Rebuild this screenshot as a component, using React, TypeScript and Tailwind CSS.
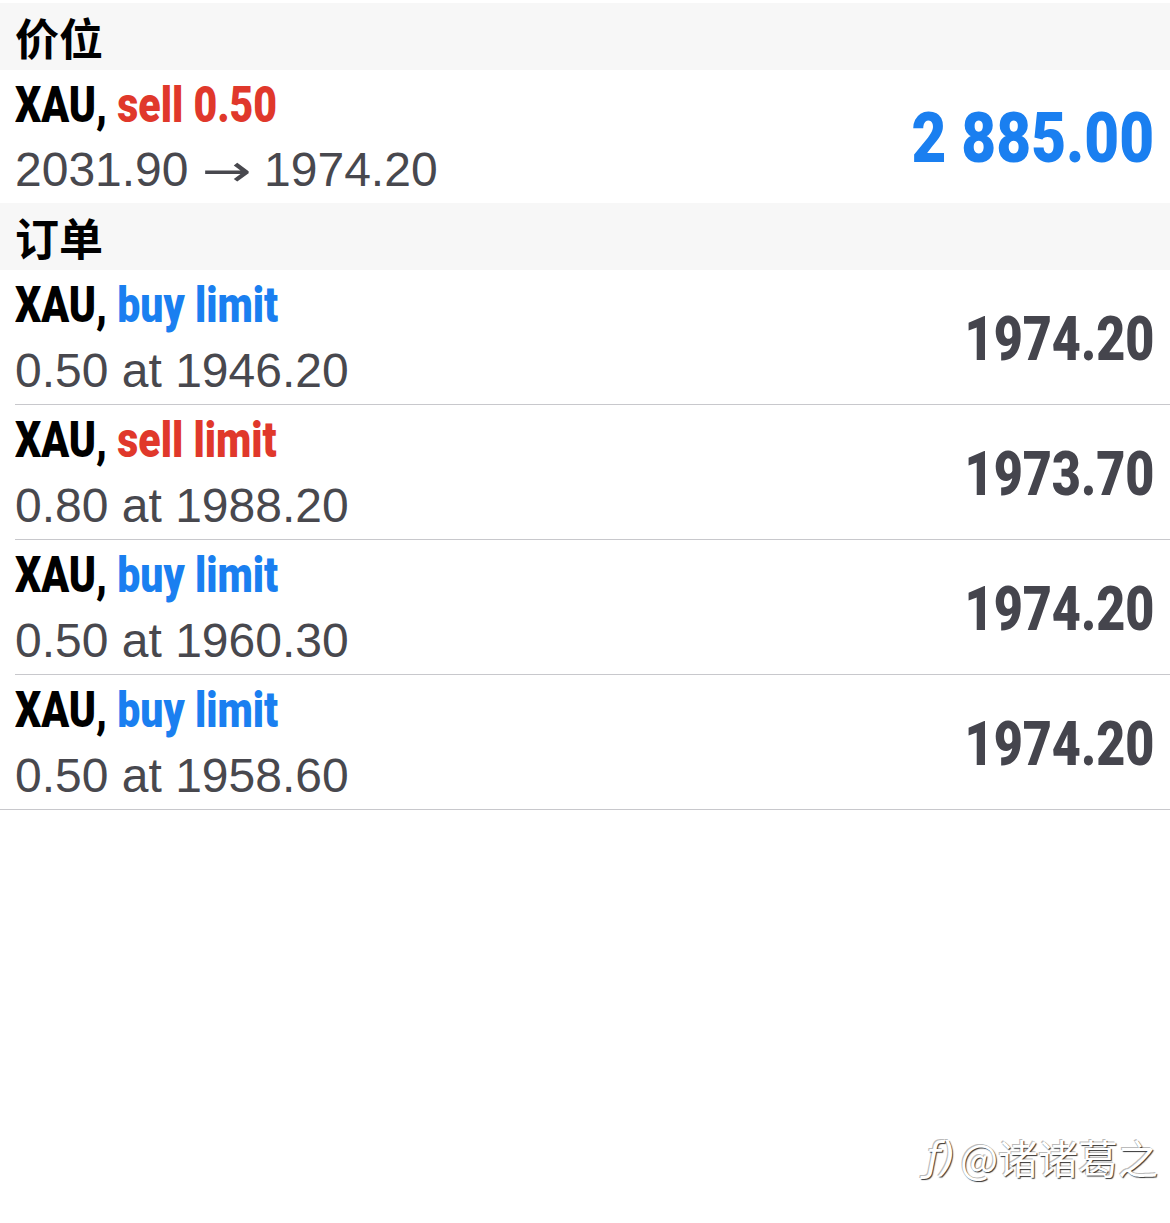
import React from 'react'

type Order = {
  side: 'buy' | 'sell'
  label: string
  sub: string
  price: string
}

const orders: Order[] = [
  { side: 'buy', label: 'buy limit', sub: '0.50 at 1946.20', price: '1974.20' },
  { side: 'sell', label: 'sell limit', sub: '0.80 at 1988.20', price: '1973.70' },
  { side: 'buy', label: 'buy limit', sub: '0.50 at 1960.30', price: '1974.20' },
  { side: 'buy', label: 'buy limit', sub: '0.50 at 1958.60', price: '1974.20' },
]

function SectionHeader({ title }: { title: string }) {
  return (
    <div className="h-[67px] bg-[#f7f7f7] pl-[15px] flex items-center">
      <span className="text-[44px] font-bold text-black leading-none [font-family:'Noto_Sans_CJK_SC',sans-serif]">
        {title}
      </span>
    </div>
  )
}

// condensed bold look: heavy sans squeezed horizontally
function Symbol({ side, label }: { side: 'buy' | 'sell'; label: string }) {
  return (
    <div className="h-[50px] whitespace-nowrap">
      <span className="inline-block origin-left scale-x-[0.82] text-[50px] font-black leading-none [font-family:'Roboto',sans-serif]">
        <span className="text-black">XAU,&nbsp;</span>
        <span className={side === 'sell' ? 'text-[#e0382b]' : 'text-[#1a7ff0]'}>{label}</span>
      </span>
    </div>
  )
}

function SubLine({ children }: { children: React.ReactNode }) {
  return (
    <div className="text-[48px] leading-none text-[#48484e] whitespace-nowrap [font-family:'Liberation_Sans',sans-serif]">
      {children}
    </div>
  )
}

export default function App() {
  return (
    <div className="w-[1170px] h-[1223px] bg-white relative overflow-hidden">
      <div className="pt-[3px]">
        <SectionHeader title="价位" />

        {/* open position */}
        <div className="h-[133px] pl-[15px] pr-[16px] flex items-center justify-between">
          <div className="flex flex-col gap-[16px]">
            <Symbol side="sell" label="sell 0.50" />
            <SubLine>
              2031.90{' '}
              <span className="inline-block mx-[6px] scale-x-[1.35] [font-family:'DejaVu_Sans',sans-serif] text-[44px]">→</span>{' '}
              1974.20
            </SubLine>
          </div>
          <div className="pt-[2px]">
            <span className="inline-block origin-right scale-x-[0.86] text-[70px] font-black leading-none text-[#1a7ff0] whitespace-nowrap [font-family:'Roboto',sans-serif]">
              2 885.00
            </span>
          </div>
        </div>

        <SectionHeader title="订单" />

        {orders.map((o, i) => {
          const last = i === orders.length - 1
          return (
            <div key={i} className={`h-[135px] flex pl-[15px] ${last ? 'border-b border-[#c8c8cc]' : ''}`}>
              <div
                className={`flex-1 flex items-center justify-between pr-[16px] ${
                  last ? '' : 'border-b border-[#c8c8cc]'
                }`}
              >
                <div className="flex flex-col gap-[17px]">
                  <Symbol side={o.side} label={o.label} />
                  <SubLine>{o.sub}</SubLine>
                </div>
                <div className="pt-[4px]">
                  <span className="inline-block origin-right scale-x-[0.81] text-[62px] font-black leading-none text-[#45454d] whitespace-nowrap [font-family:'Roboto',sans-serif]">
                    {o.price}
                  </span>
                </div>
              </div>
            </div>
          )
        })}
      </div>

      {/* watermark */}
      <div className="absolute right-[12px] bottom-[46px] flex items-center gap-[4px] text-white text-[40px] leading-none [font-family:'Noto_Sans_CJK_SC',sans-serif] [text-shadow:1px_1px_1px_#333,-1px_-1px_0_#bbb]">
        <span className="italic [font-family:'DejaVu_Sans',sans-serif]">ƒ)</span>
        <span>@诸诸葛之</span>
      </div>
    </div>
  )
}
